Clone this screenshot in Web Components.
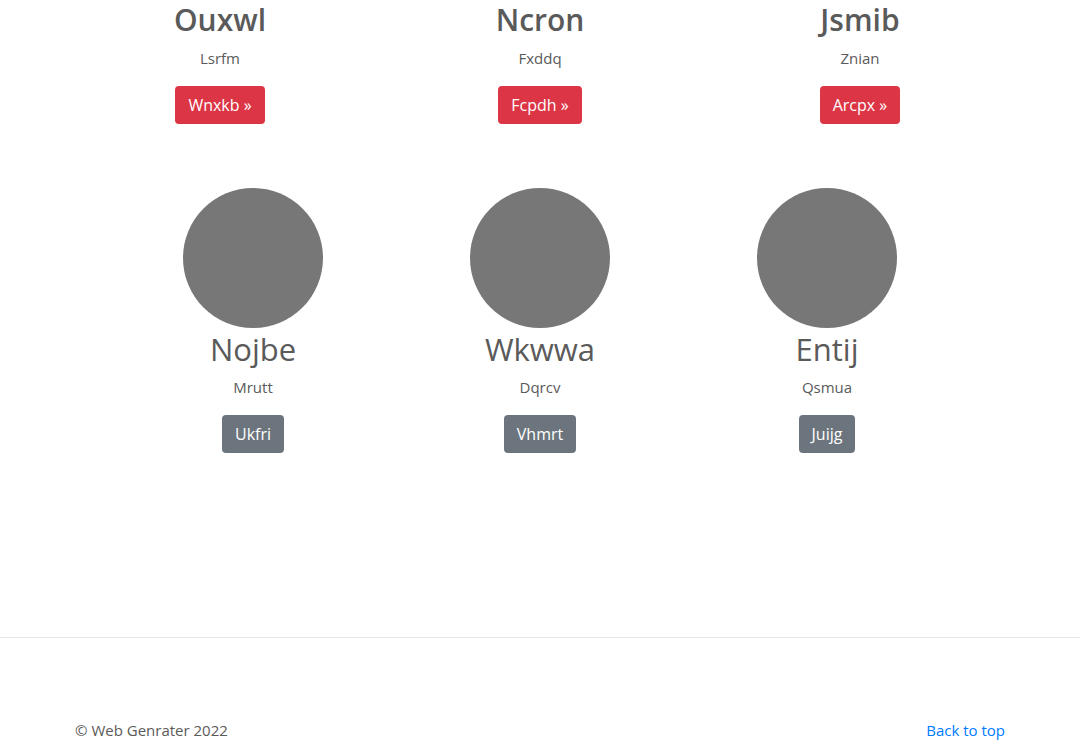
<!DOCTYPE html>
<html lang="en">
<head>
<meta charset="utf-8">
<meta name="viewport" content="width=device-width, initial-scale=1">
<title>Web Genrater</title>
<style>
body { margin: 0; background: #fff; color: #5a5a5a; font: 400 15px/24px "Open Sans", "Noto Sans", sans-serif; }
</style>
</head>
<body>
<marketing-page>
  <card-row slot="features">
    <feature-card heading="Ouxwl" text="Lsrfm" action="Wnxkb »"></feature-card>
    <feature-card heading="Ncron" text="Fxddq" action="Fcpdh »"></feature-card>
    <feature-card heading="Jsmib" text="Znian" action="Arcpx »"></feature-card>
  </card-row>
  <card-row slot="people" narrow>
    <profile-card heading="Nojbe" text="Mrutt" action="Ukfri"></profile-card>
    <profile-card heading="Wkwwa" text="Dqrcv" action="Vhmrt"></profile-card>
    <profile-card heading="Entij" text="Qsmua" action="Juijg"></profile-card>
  </card-row>
  <page-footer slot="footer">© Web Genrater 2022</page-footer>
</marketing-page>
<script>
class MarketingPage extends HTMLElement {
  constructor() {
    super();
    this.attachShadow({ mode: "open" }).innerHTML = `
      <style>
        :host { display: block; }
        .people { padding-top: 64px; }
        hr { margin: 184px 0 80px; border: 0; border-top: 1px solid #e5e5e5; }
      </style>
      <main>
        <slot name="features"></slot>
        <div class="people"><slot name="people"></slot></div>
      </main>
      <hr>
      <slot name="footer"></slot>`;
  }
}
class CardRow extends HTMLElement {
  constructor() {
    super();
    this.attachShadow({ mode: "open" }).innerHTML = `
      <style>
        :host { display: grid; grid-template-columns: repeat(3, 1fr); max-width: 960px; margin: 0 auto; text-align: center; }
        :host([narrow]) { max-width: 861px; }
      </style>
      <slot></slot>`;
  }
}
const cardStyle = `
  :host { display: block; }
  h2 { margin: 0 0 6px; line-height: 40px; }
  p { margin: 0 0 16px; }
  a { display: inline-block; box-sizing: border-box; height: 38px; padding: 7px 13px; border-radius: 4px; color: #fff; font-size: 16px; text-decoration: none; vertical-align: top; }`;
class FeatureCard extends HTMLElement {
  connectedCallback() {
    this.attachShadow({ mode: "open" }).innerHTML = `
      <style>${cardStyle}
        h2 { font-size: 30px; font-weight: 600; }
        a { background: #dc3545; }
      </style>
      <h2>${this.getAttribute("heading")}</h2>
      <p>${this.getAttribute("text")}</p>
      <a href="#">${this.getAttribute("action")}</a>`;
  }
}
class ProfileCard extends HTMLElement {
  connectedCallback() {
    this.attachShadow({ mode: "open" }).innerHTML = `
      <style>${cardStyle}
        svg { display: block; margin: 0 auto 1px; }
        h2 { font-size: 31px; font-weight: 400; }
        a { background: #6c757d; }
      </style>
      <svg width="140" height="140" viewBox="0 0 140 140" aria-hidden="true"><circle cx="70" cy="70" r="70" fill="#777"/></svg>
      <h2>${this.getAttribute("heading")}</h2>
      <p>${this.getAttribute("text")}</p>
      <a href="#">${this.getAttribute("action")}</a>`;
  }
}
class PageFooter extends HTMLElement {
  constructor() {
    super();
    this.attachShadow({ mode: "open" }).innerHTML = `
      <style>
        :host { display: block; }
        footer { display: flex; justify-content: space-between; max-width: 930px; margin: 0 auto; }
        a { color: #007bff; text-decoration: none; }
      </style>
      <footer><span><slot></slot></span><a href="#">Back to top</a></footer>`;
  }
}
customElements.define("marketing-page", MarketingPage);
customElements.define("card-row", CardRow);
customElements.define("feature-card", FeatureCard);
customElements.define("profile-card", ProfileCard);
customElements.define("page-footer", PageFooter);
</script>
</body>
</html>
